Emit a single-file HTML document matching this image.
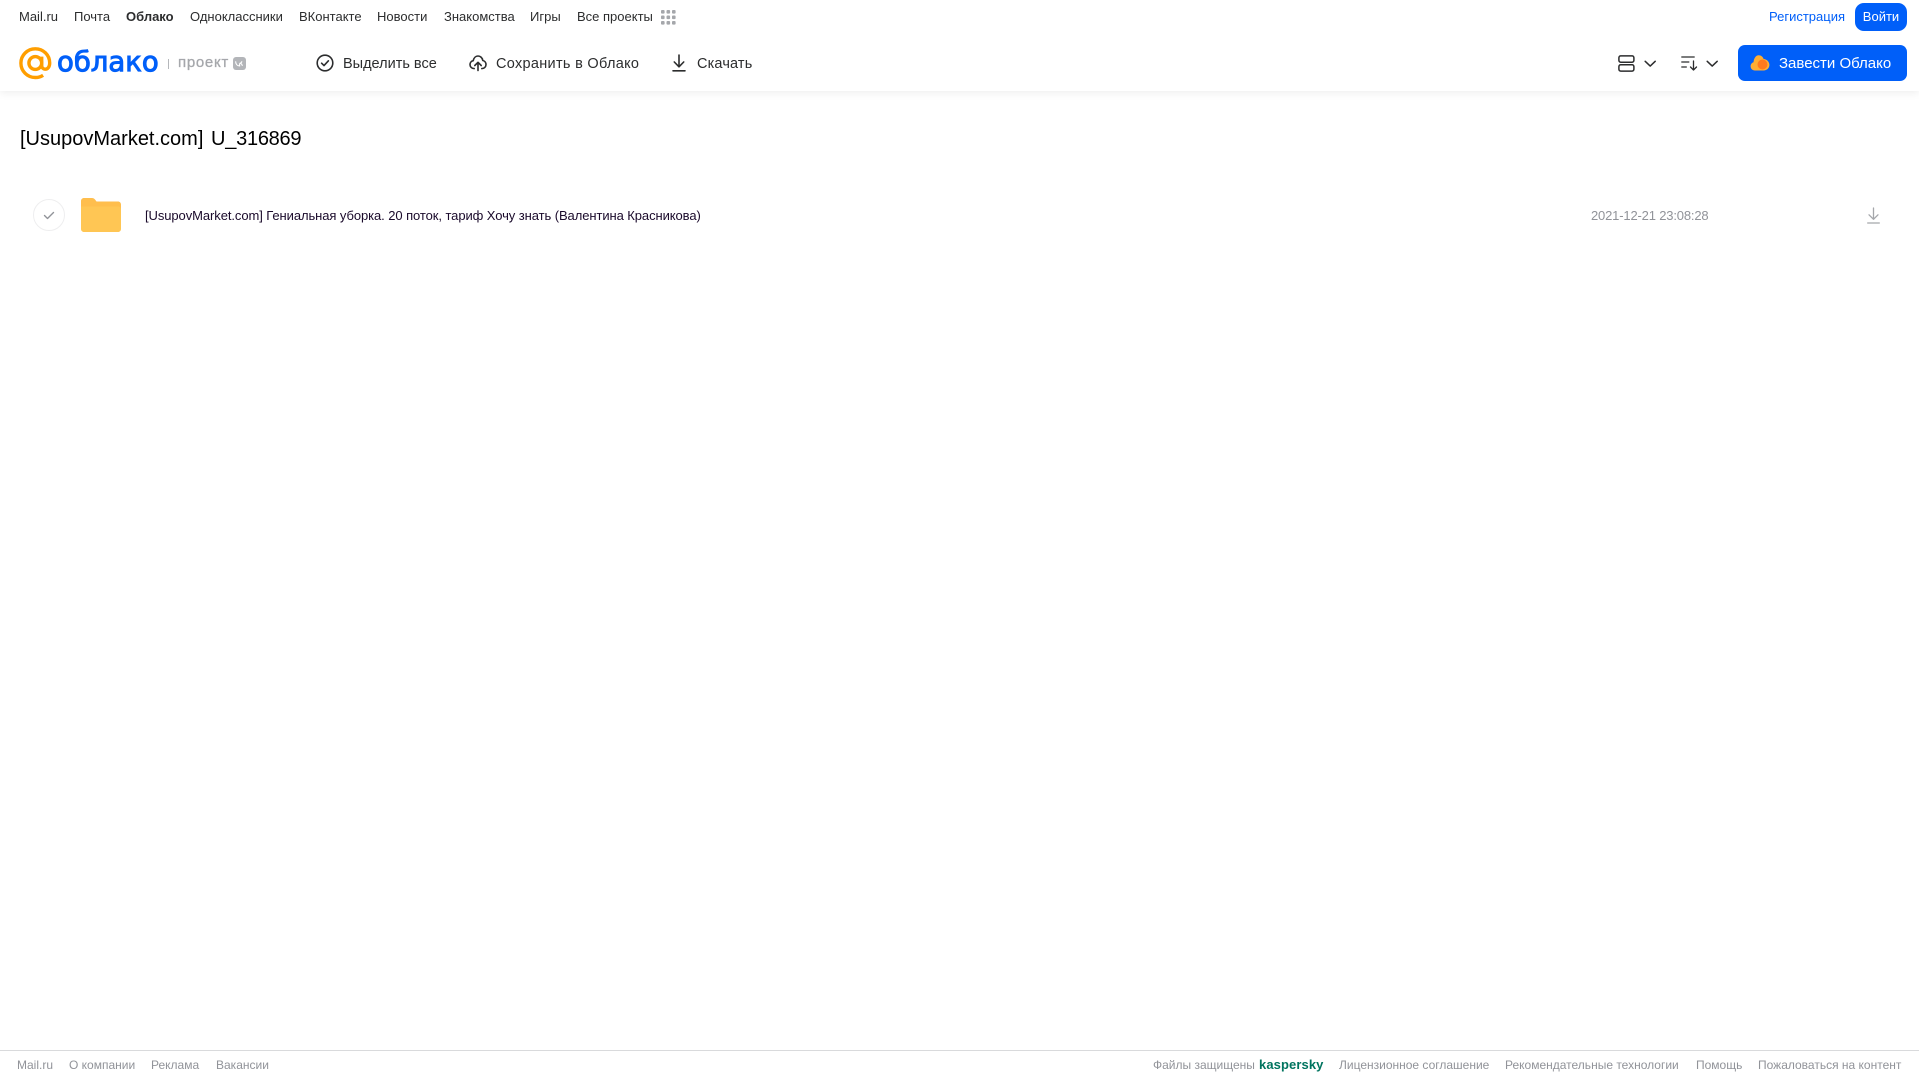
<!DOCTYPE html>
<html lang="ru">
<head>
<meta charset="utf-8">
<title>Облако</title>
<style>
html,body{margin:0;padding:0;background:#fff;width:1919px;height:1079px;overflow:hidden}
body{position:relative;font-family:"Liberation Sans",sans-serif}
.t{position:absolute;white-space:nowrap;line-height:20px}
.n{top:7px;font-size:13px;color:#2c2d2e}
.a{top:54px;font-size:14.5px;color:#2c2d2e}
.f{top:1055px;font-size:12px;color:#919399}
svg{position:absolute;overflow:visible}
#hd{position:absolute;left:0;top:0;width:1919px;height:91px;background:#fff;box-shadow:0 2px 8px rgba(0,0,0,.07)}
</style>
</head>
<body>
<div id="hd"></div>

<span class="t n" style="left:19px">Mail.ru</span>
<span class="t n" style="left:74px">Почта</span>
<span class="t n" style="left:126px;font-weight:bold">Облако</span>
<span class="t n" style="left:190px">Одноклассники</span>
<span class="t n" style="left:299px">ВКонтакте</span>
<span class="t n" style="left:377px">Новости</span>
<span class="t n" style="left:444px">Знакомства</span>
<span class="t n" style="left:530px">Игры</span>
<span class="t n" style="left:577px">Все проекты</span>
<svg style="left:661px;top:10px" width="15" height="15" viewBox="0 0 15 15" fill="#a5a7ab">
<rect x="0" y="0" width="3.6" height="3.6" rx="1"/><rect x="5.5" y="0" width="3.6" height="3.6" rx="1"/><rect x="11" y="0" width="3.6" height="3.6" rx="1"/>
<rect x="0" y="5.5" width="3.6" height="3.6" rx="1"/><rect x="5.5" y="5.5" width="3.6" height="3.6" rx="1"/><rect x="11" y="5.5" width="3.6" height="3.6" rx="1"/>
<rect x="0" y="11" width="3.6" height="3.6" rx="1"/><rect x="5.5" y="11" width="3.6" height="3.6" rx="1"/><rect x="11" y="11" width="3.6" height="3.6" rx="1"/>
</svg>

<span class="t n" style="left:1769px;color:#005ff9">Регистрация</span>
<div style="position:absolute;left:1855px;top:3px;width:52px;height:28px;border-radius:9px;background:#005ff9;color:#fff;font-size:13px;line-height:28px;text-align:center">Войти</div>

<!-- logo -->
<svg style="left:19px;top:47px" width="33" height="33" viewBox="0 0 33 33" fill="none" stroke="#ff9e00" stroke-width="3.4">
<circle cx="16.3" cy="16" r="6.4"/>
<path d="M22.7 9.6v8.6c0 2.6 1.7 4 3.6 4 2.3 0 4.4-2.2 4.4-6.2C30.7 8 24.3 1.8 16.3 1.8 8.4 1.8 1.9 8.2 1.9 16.1c0 8 6.4 14.4 14.4 14.4 3 0 5.600-.8 7.800-2.200"/>
</svg>
<span class="t" style="left:57px;top:44px;font-size:27.5px;line-height:36px;color:#005ff9;letter-spacing:0;font-family:'DejaVu Sans',sans-serif;-webkit-text-stroke:1px #005ff9">облако</span>
<div style="position:absolute;left:168px;top:59px;width:1px;height:10px;background:#b5b7bb"></div>
<span class="t" style="left:178px;top:53px;font-size:15px;color:#a5a7ab;letter-spacing:.7px;-webkit-text-stroke:.3px #a5a7ab">проект</span>
<svg style="left:233px;top:57px" width="13" height="13" viewBox="0 0 13 13"><rect width="13" height="13" rx="3" fill="#b3b5b9"/><path d="M2.6 4.3c.1 2.8 1.6 4.6 4 4.6V6.4M6.6 6.4c1.3-.1 2-1 2.3-2.1M7.4 6.4c.9.2 1.6 1 2 2.5" fill="none" stroke="#fff" stroke-width="1.1"/></svg>

<!-- actions -->
<svg style="left:316px;top:54px" width="18" height="18" viewBox="0 0 18 18" fill="none" stroke="#2c2d2e" stroke-width="1.6" stroke-linecap="round" stroke-linejoin="round"><circle cx="9" cy="9" r="7.8"/><path d="M5.6 9.2l2.4 2.4 4.4-4.8"/></svg>
<span class="t a" style="left:343px">Выделить все</span>

<svg style="left:469px;top:54px" width="18" height="18" viewBox="0 0 18 18" fill="none" stroke="#2c2d2e" stroke-width="1.6" stroke-linecap="round" stroke-linejoin="round"><path d="M5.2 14.6C2.8 14.6 1 12.8 1 10.6c0-2 1.4-3.6 3.2-3.9C4.8 3.8 6.700 2 9 2c2.400 0 4.400 1.800 4.800 4.500C15.600 6.900 17 8.500 17 10.500c0 2.300-1.800 4.100-4.200 4.100"/><path d="M9 16.500V8.500M5.800 11.500L9 8.300l3.200 3.200"/></svg>
<span class="t a" style="left:496px;letter-spacing:.3px">Сохранить в Облако</span>

<svg style="left:672px;top:54px" width="14" height="18" viewBox="0 0 14 18" fill="none" stroke="#2c2d2e" stroke-width="1.6" stroke-linecap="round" stroke-linejoin="round"><path d="M7 1v11.500M2.300 8l4.700 4.800L11.700 8M1 16.800h12"/></svg>
<span class="t a" style="left:697px;letter-spacing:.15px">Скачать</span>

<svg style="left:1618px;top:55px" width="17" height="17" viewBox="0 0 17 17" fill="none" stroke="#2c2d2e" stroke-width="1.5"><rect x=".9" y=".9" width="15" height="6.300" rx="1.800"/><rect x=".9" y="9.800" width="15" height="6.300" rx="1.800"/></svg>
<svg style="left:1644px;top:60px" width="13" height="8" viewBox="0 0 13 8" fill="none" stroke="#2c2d2e" stroke-width="1.500" stroke-linecap="round" stroke-linejoin="round"><path d="M1.200 1.300l5 4.800 5-4.800"/></svg>
<svg style="left:1681px;top:56px" width="17" height="15" viewBox="0 0 17 15" fill="none" stroke="#2c2d2e" stroke-width="1.300" stroke-linecap="round" stroke-linejoin="round"><path d="M.8 1h12.400M.8 6h7M.8 11h4.500M12.500 5v9M9.500 11l3 3 3-3"/></svg>
<svg style="left:1706px;top:60px" width="13" height="8" viewBox="0 0 13 8" fill="none" stroke="#2c2d2e" stroke-width="1.500" stroke-linecap="round" stroke-linejoin="round"><path d="M1.200 1.300l5 4.800 5-4.800"/></svg>

<div style="position:absolute;left:1738px;top:45px;width:169px;height:36px;border-radius:7px;background:#005ff9"></div>
<svg style="left:1750px;top:54px" width="20" height="18" viewBox="0 0 20 18"><path d="M5 16.500C2.300 16.500.6 14.700.6 12.300c0-2 1.200-3.500 2.900-4C4 4 5.800 1.200 8.700 1.200c2.500 0 4.200 1.600 4.900 3.800 3.200.2 5.800 2.800 5.800 5.900 0 3.200-2.500 5.600-5.800 5.600z" fill="#ffae33"/><circle cx="12.500" cy="10.500" r="5" fill="#ff7a1f"/></svg>
<span class="t" style="left:1779px;top:54px;font-size:15px;color:#fff">Завести Облако</span>

<!-- title -->
<span class="t" style="left:20px;top:125px;font-size:20px;line-height:28px;color:#000">[UsupovMarket.com]</span>
<span class="t" style="left:211px;top:125px;font-size:20px;line-height:28px;color:#000;letter-spacing:-.25px">U_316869</span>

<!-- row -->
<div style="position:absolute;left:33px;top:199px;width:30px;height:30px;border:1px solid #eeeeef;border-radius:50%"></div>
<svg style="left:43px;top:211px" width="12" height="9" viewBox="0 0 12 9" fill="none" stroke="#919399" stroke-width="1.400" stroke-linecap="round" stroke-linejoin="round"><path d="M1.500 4.500l3 3 6-6"/></svg>
<svg style="left:81px;top:198px" width="40" height="34" viewBox="0 0 40 34">
<path d="M0 3C0 1.300 1.300 0 3 0h8c1.200 0 2.200.5 3 1.500L15.500 3.500H37c1.700 0 3 1.300 3 3V12H0z" fill="#ffbe4d"/>
<path d="M0 8.500h37c1.700 0 3 1.300 3 3V31c0 1.700-1.300 3-3 3H3c-1.700 0-3-1.300-3-3z" fill="#ffc654"/>
</svg>
<span class="t" style="left:145px;top:206px;font-size:13px;color:#1a0a2b;letter-spacing:-.08px">[UsupovMarket.com] Гениальная уборка. 20 поток, тариф Хочу знать (Валентина Красникова)</span>
<span class="t" style="left:1591px;top:206px;font-size:13px;color:#919399;letter-spacing:-.17px">2021-12-21 23:08:28</span>
<svg style="left:1867px;top:207px" width="13" height="17" viewBox="0 0 13 17" fill="none" stroke="#a5a7ab" stroke-width="1.300" stroke-linecap="round" stroke-linejoin="round"><path d="M6.500 1v11M2 7.800l4.500 4.500L11 7.800M.7 16h11.600"/></svg>

<!-- footer -->
<div style="position:absolute;left:0;top:1050px;width:1919px;height:1px;background:#d9dadc"></div>
<span class="t f" style="left:17px">Mail.ru</span>
<span class="t f" style="left:69px">О компании</span>
<span class="t f" style="left:151px">Реклама</span>
<span class="t f" style="left:216px">Вакансии</span>
<span class="t f" style="left:1153px">Файлы защищены</span>
<span class="t f" style="left:1259px;color:#00745f;font-weight:bold;font-size:13px;letter-spacing:.1px">kaspersky</span>
<span class="t f" style="left:1339px">Лицензионное соглашение</span>
<span class="t f" style="left:1505px">Рекомендательные технологии</span>
<span class="t f" style="left:1696px">Помощь</span>
<span class="t f" style="left:1758px">Пожаловаться на контент</span>
</body>
</html>
